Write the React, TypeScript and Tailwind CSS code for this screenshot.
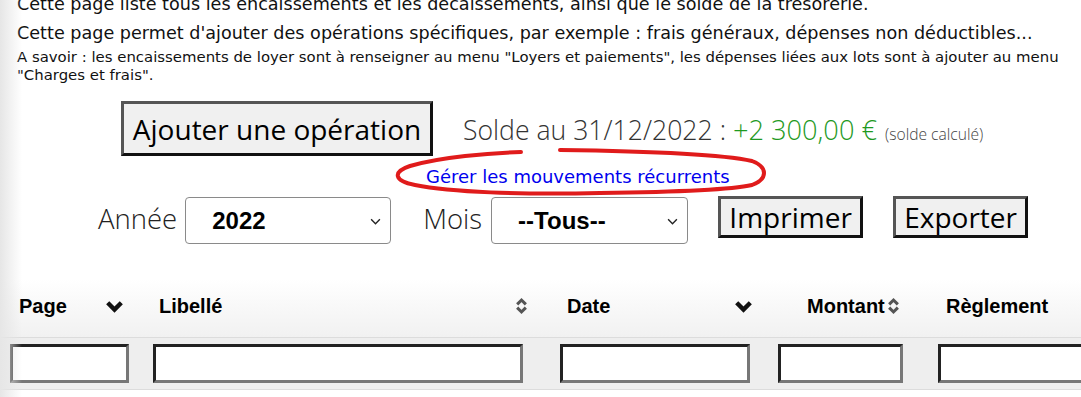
import React from "react";

const seg = { fontFamily: '"Open Sans", "Noto Sans", sans-serif' };

function ChevronDown({ className = "" }: { className?: string }) {
  return (
    <svg viewBox="0 0 18 13" className={className} fill="none">
      <path d="M2.2 2.8 L9 9.6 L15.8 2.8" stroke="#111" strokeWidth="4.4" strokeLinejoin="miter" />
    </svg>
  );
}

function SortIcon({ className = "" }: { className?: string }) {
  return (
    <svg viewBox="0 0 12 18" className={className} fill="none">
      <path d="M2 7.5 L6 3.5 L10 7.5" stroke="#555" strokeWidth="2.8" />
      <path d="M2 10.5 L6 14.5 L10 10.5" stroke="#555" strokeWidth="2.8" />
    </svg>
  );
}

function SelectBox({ value, width }: { value: string; width: string }) {
  return (
    <div
      className={`relative flex h-[47px] items-center rounded-[4px] border border-[#8a8a8a] bg-white pl-[26px] ${width}`}
    >
      <span className="text-[24px] font-bold text-black" style={{ fontFamily: '"Liberation Sans", Arial, sans-serif' }}>
        {value}
      </span>
      <svg viewBox="0 0 12 8" className="absolute right-[9px] top-[20px] h-[7px] w-[11px]" fill="none">
        <path d="M1 1.5 L6 6.5 L11 1.5" stroke="#222" strokeWidth="1.6" />
      </svg>
    </div>
  );
}

function OldButton({ children, className = "" }: { children: React.ReactNode; className?: string }) {
  return (
    <button
      className={`flex items-center justify-center border-[3px] border-t-[#555] border-l-[#555] border-b-[#111] border-r-[#111] bg-[#f0f0f0] text-[28px] leading-none text-black ${className}`}
      style={seg}
    >
      {children}
    </button>
  );
}

function FilterInput({ className = "" }: { className?: string }) {
  return (
    <div
      className={`h-[39px] border-[3px] border-t-[#222] border-l-[#222] border-b-[#777] border-r-[#777] bg-white ${className}`}
    />
  );
}

export default function App() {
  const verdana = { fontFamily: '"DejaVu Sans", Verdana, sans-serif' };

  return (
    <div className="relative h-[397px] w-full overflow-hidden bg-white text-black">
      {/* left page shadow */}
      <div className="pointer-events-none absolute inset-y-0 left-0 z-10 w-[22px] bg-[linear-gradient(to_right,#e6e6e6,rgba(255,255,255,0))]" />

      <div className="pl-[17px]" style={verdana}>
        <p className="-mt-[5px] whitespace-nowrap text-[17.6px] leading-[18px] text-[#111]">
          Cette page liste tous les encaissements et les décaissements, ainsi que le solde de la trésorerie.
        </p>
        <p className="mt-[11px] whitespace-nowrap text-[17.6px] leading-[18px] text-[#111]">
          Cette page permet d'ajouter des opérations spécifiques, par exemple : frais généraux, dépenses non
          déductibles...
        </p>
        <p className="mt-[6px] pr-[14px] text-[14.9px] leading-[18px] text-[#111]">
          A savoir : les encaissements de loyer sont à renseigner au menu "Loyers et paiements", les dépenses liées
          aux lots sont à ajouter au menu "Charges et frais".
        </p>
      </div>

      {/* solde row */}
      <div className="mt-[17px] flex items-center pl-[121px]">
        <OldButton className="h-[55px] w-[312px]">Ajouter une opération</OldButton>
        <div className="ml-[30px] flex items-baseline pt-[4px] text-[26.6px] font-light text-[#333]" style={seg}>
          <span>Solde au 31/12/2022 :&nbsp;</span>
          <span className="text-[27.2px] text-[#1f9a1f]">+2 300,00 €</span>
          <span className="ml-[8px] text-[15.6px] text-[#444]">(solde calculé)</span>
        </div>
      </div>

      <div className="mt-[9px] pl-[426px]">
        <a className="whitespace-nowrap text-[18px] leading-[20px] text-[#0000ee]" style={verdana}>
          Gérer les mouvements récurrents
        </a>
      </div>

      {/* filter controls */}
      <div className="mt-[7px] flex items-start pl-[98px]" style={seg}>
        <span className="mt-[2px] text-[27.5px] font-light leading-[42px] text-[#222]">Année</span>
        <SelectBox value="2022" width="ml-[8px] mt-[1px] w-[206px]" />
        <span className="ml-[32px] mt-[2px] text-[27.5px] font-light leading-[42px] text-[#222]">Mois</span>
        <SelectBox value="--Tous--" width="ml-[9px] mt-[1px] w-[197px]" />
        <OldButton className="ml-[30px] h-[42px] w-[145px]">Imprimer</OldButton>
        <OldButton className="ml-[30px] h-[42px] w-[135px]">Exporter</OldButton>
      </div>

      {/* table head */}
      <div
        className="mt-[35px] border-b border-[#dcdcdc]"
        style={{ fontFamily: '"Liberation Sans", Arial, sans-serif' }}
      >
        <div className="grid h-[58px] grid-cols-[140px_408px_220px_160px_1fr] items-center bg-[linear-gradient(to_bottom,#ffffff,#f1f1f1)] pb-[4px] text-[20px] font-bold">
          <div className="flex items-center pl-[19px]">
            <span>Page</span>
            <ChevronDown className="ml-[38px] h-[13px] w-[19px]" />
          </div>
          <div className="flex items-center pl-[19px]">
            <span>Libellé</span>
            <SortIcon className="ml-auto mr-[20px] h-[20px] w-[13px]" />
          </div>
          <div className="flex items-center pl-[19px]">
            <span>Date</span>
            <ChevronDown className="ml-auto mr-[15px] h-[13px] w-[19px]" />
          </div>
          <div className="flex items-center pl-[39px]">
            <span>Montant</span>
            <SortIcon className="ml-[2px] h-[20px] w-[13px]" />
          </div>
          <div className="pl-[18px]">Règlement</div>
        </div>
      </div>
      <div className="grid h-[52px] grid-cols-[140px_408px_220px_160px_1fr] items-center border-b border-[#dcdcdc] bg-[#eeeeee]">
        <FilterInput className="ml-[10px] w-[119px]" />
        <FilterInput className="ml-[13px] w-[370px]" />
        <FilterInput className="ml-[12px] w-[190px]" />
        <FilterInput className="ml-[10px] w-[125px]" />
        <FilterInput className="ml-[10px] w-[200px]" />
      </div>

      {/* hand-drawn red annotation */}
      <svg className="pointer-events-none absolute left-0 top-0 z-20" width="1081" height="397" fill="none">
        <path
          d="M521 152 C 490 153, 440 157, 410 166 C 392 172, 394 181, 415 185 C 450 192, 520 195, 600 193 C 680 192, 730 190, 752 185 C 768 179, 768 167, 752 161 C 720 154, 640 151, 560 150"
          stroke="#e01b1b"
          strokeWidth="4"
          strokeLinecap="round"
        />
      </svg>
    </div>
  );
}
